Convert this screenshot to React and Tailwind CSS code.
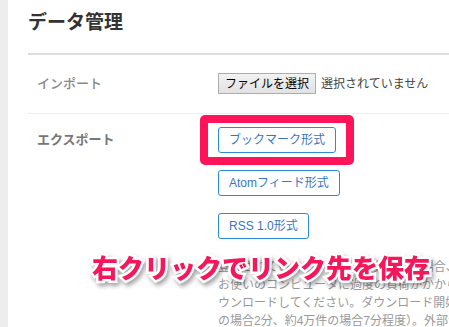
const jp = { fontFamily: '"Liberation Sans", "Noto Sans CJK JP", sans-serif' };

const ExportButton = ({ children }) => (
  <button className="h-[26px] rounded-[3px] border border-[#2a8bd6] bg-white px-[10px] text-[12px] leading-none text-[#3a75c4]">
    {children}
  </button>
);

export default function App() {
  return (
    <div className="relative flex h-[327px] w-[449px] overflow-hidden bg-white" style={jp}>
      <div className="w-2 shrink-0 bg-[#ededed]" />
      <div className="flex-1 pl-5 pt-[10px]">
        <h2 className="text-[19px] font-bold leading-[26px] text-[#333]">データ管理</h2>
        <div className="mt-[17px] h-[2px] bg-[#dddddd]" />

        <div className="flex pb-[19px] pt-[18px]">
          <div className="w-[190px] shrink-0 pl-[9px] text-[13px] font-medium leading-[21px] text-[#888]">インポート</div>
          <div className="flex items-center gap-[5px] whitespace-nowrap">
            <span className="flex h-[21px] items-center border border-[#adadad] bg-gradient-to-b from-[#f2f2f2] to-[#e2e2e2] px-[6px] text-[12px] text-black">
              ファイルを選択
            </span>
            <span className="text-[12px] text-[#444]">選択されていません</span>
          </div>
        </div>
        <div className="h-px bg-[#eeeeee]" />

        <div className="flex pt-[13px]">
          <div className="w-[190px] shrink-0 pl-[9px] text-[13px] font-bold leading-[26px] text-[#777]">エクスポート</div>
          <div className="flex flex-col items-start">
            <div className="flex flex-col items-start gap-[17px]">
              <ExportButton>ブックマーク形式</ExportButton>
              <ExportButton>Atomフィード形式</ExportButton>
              <ExportButton>RSS 1.0形式</ExportButton>
            </div>
            <div className="mt-[19px] whitespace-nowrap text-[12px] leading-[18px] text-[#999]">
              <div>登録されているブックマーク数が多い場合、</div>
              <div>お使いのコンピュータに過度の負荷がかからないよう、時間をおいてダ</div>
              <div>ウンロードしてください。ダウンロード開始までに時間がかかります（約1万件</div>
              <div>の場合2分、約4万件の場合7分程度）。外部サービスへの</div>
            </div>
          </div>
        </div>
      </div>

      <div className="pointer-events-none absolute left-[200px] top-[115px] h-[50px] w-[154px] rounded-[5px] border-8 border-[#ff145a]" />

      <div className="pointer-events-none absolute left-[92px] top-[251px] whitespace-nowrap text-[26px] font-black leading-[36px] text-[#f5175a] [-webkit-text-stroke:5px_white] [filter:drop-shadow(2px_3px_2px_rgba(0,0,0,0.35))] [paint-order:stroke_fill]">
        右クリックでリンク先を保存
      </div>
    </div>
  );
}
